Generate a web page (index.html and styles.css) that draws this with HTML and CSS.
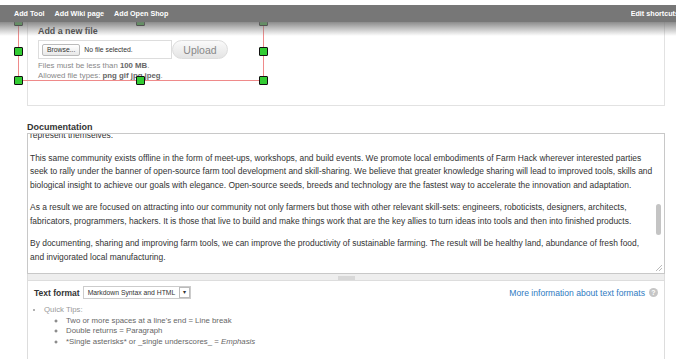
FILE: index.html
```html
<!DOCTYPE html>
<html lang="en">
<head>
  <meta charset="UTF-8">
  <title>Add tool</title>
  <link rel="stylesheet" href="styles.css">
</head>
<body>
  <div class="toolbar">
    <nav class="shortcuts">
      <a href="#">Add Tool</a>
      <a href="#">Add Wiki page</a>
      <a href="#">Add Open Shop</a>
    </nav>
    <a href="#" class="edit">Edit shortcuts</a>
  </div>

  <main class="content">
    <div class="upload">
      <div class="upload-title">Add a new file</div>
      <div class="file-row">
        <div class="file-input">
          <span class="browse">Browse...</span>
          <span class="no-file">No file selected.</span>
        </div>
        <button class="upload-btn">Upload</button>
      </div>
      <div class="desc">Files must be less than <strong>100 MB</strong>.</div>
      <div class="desc">Allowed file types: <strong>png gif jpg jpeg</strong>.</div>

      <div class="selection">
        <span class="handle tl"></span>
        <span class="handle tm"></span>
        <span class="handle tr"></span>
        <span class="handle ml"></span>
        <span class="handle mr"></span>
        <span class="handle bl"></span>
        <span class="handle bm"></span>
        <span class="handle br"></span>
      </div>
    </div>

    <div class="doc">
      <label class="doc-label">Documentation</label>
      <div class="textarea">
        <div class="textarea-view">
          <div class="textarea-text">
            <p>represent themselves.</p>
            <p>This same community exists offline in the form of meet-ups, workshops, and build events. We promote local embodiments of Farm Hack wherever interested parties<br>seek to rally under the banner of open-source farm tool development and skill-sharing. We believe that greater knowledge sharing will lead to improved tools, skills and<br>biological insight to achieve our goals with elegance. Open-source seeds, breeds and technology are the fastest way to accelerate the innovation and adaptation.</p>
            <p>As a result we are focused on attracting into our community not only farmers but those with other relevant skill-sets: engineers, roboticists, designers, architects,<br>fabricators, programmers, hackers. It is those that live to build and make things work that are the key allies to turn ideas into tools and then into finished products.</p>
            <p>By documenting, sharing and improving farm tools, we can improve the productivity of sustainable farming. The result will be healthy land, abundance of fresh food,<br>and invigorated local manufacturing.</p>
          </div>
        </div>
        <div class="scrollbar">
          <div class="thumb"></div>
          <svg class="resize" width="6" height="6" viewBox="0 0 6 6">
            <path d="M6 0 L0 6 M6 3 L3 6" stroke="#aaa" stroke-width="0.8"/>
          </svg>
        </div>
      </div>
      <div class="grippie"><span></span></div>

      <div class="format">
        <div class="format-row">
          <div class="format-select">
            <span class="format-label">Text format</span>
            <span class="select">Markdown Syntax and HTML <span class="arrow">&#9662;</span></span>
          </div>
          <a href="#" class="format-link">More information about text formats <span class="help">?</span></a>
        </div>
        <ul class="tips">
          <li>Quick Tips:
            <ul>
              <li>Two or more spaces at a line's end = Line break</li>
              <li>Double returns = Paragraph</li>
              <li>*Single asterisks* or _single underscores_ = <em>Emphasis</em></li>
            </ul>
          </li>
        </ul>
      </div>
    </div>
  </main>
</body>
</html>
```

FILE: styles.css
```css
body {
  margin: 0;
  background-color: #fff;
  font-family: 'Liberation Sans', Arial, sans-serif;
  color: #333;
  width: 696px;
  height: 359px;
  overflow: hidden;
}

/* shortcut bar */
.toolbar {
  position: relative;
  z-index: 2;
  margin-top: 5px;
  width: 676px;
  height: 17px;
  background-color: #777;
  display: flex;
  align-items: center;
  justify-content: space-between;
  font-size: 7.2px;
  font-weight: bold;
}

.toolbar::after {
  content: '';
  position: absolute;
  left: 0;
  right: 0;
  top: 100%;
  height: 14px;
  background: linear-gradient(rgba(119, 119, 119, 0.85), rgba(255, 255, 255, 0));
}

.toolbar a {
  color: #fff;
  text-decoration: none;
}

.shortcuts {
  display: flex;
  gap: 10px;
  padding-left: 14px;
}

.edit {
  margin-right: -3px;
  white-space: nowrap;
  clip-path: inset(0 3px 0 0);
}

.content {
  padding-left: 27px;
  width: 638px;
}

/* upload field */
.upload {
  position: relative;
  border: 1px solid #e2e2e2;
  border-top: none;
  padding: 3px 10px 24px;
}

.upload-title {
  font-size: 8.9px;
  font-weight: bold;
  line-height: 12px;
  color: #444;
}

.file-row {
  display: flex;
  align-items: center;
  margin-top: 3px;
  margin-bottom: 2px;
}

.file-input {
  width: 129px;
  height: 17px;
  border: 1px solid #ddd;
  display: flex;
  align-items: center;
  gap: 4px;
  padding-left: 3px;
  font-size: 6.8px;
}

.browse {
  border: 1px solid #bbb;
  border-radius: 2px;
  background: linear-gradient(#fff, #e8e8e8);
  padding: 1px 4px;
  line-height: 8px;
}

.upload-btn {
  width: 56px;
  height: 19px;
  border: 1px solid #ddd;
  border-radius: 10px;
  background: linear-gradient(#fafafa, #e4e4e4);
  color: #888;
  font-family: 'Liberation Sans', Arial, sans-serif;
  font-size: 10.5px;
  padding: 0;
}

.desc {
  font-size: 7.8px;
  line-height: 10px;
  color: #888;
}

.desc strong {
  color: #666;
}

/* selection rectangle over the upload field */
.selection {
  position: absolute;
  left: -10px;
  top: -1px;
  width: 244px;
  height: 58px;
  border: 1px solid #ef8a8a;
}

.handle {
  position: absolute;
  width: 7px;
  height: 7px;
  background-color: #33cc33;
  border: 1px solid #111;
  border-radius: 1px;
}

.tl { left: -5px; top: -5px; }
.tm { left: 117px; top: -5px; }
.tr { right: -5px; top: -5px; }
.ml { left: -5px; top: 25px; }
.mr { right: -5px; top: 25px; }
.bl { left: -5px; bottom: -5px; }
.bm { left: 117px; bottom: -5px; }
.br { right: -5px; bottom: -5px; }

/* documentation */
.doc {
  margin-top: 15px;
}

.doc-label {
  display: block;
  font-size: 9px;
  font-weight: bold;
  line-height: 12px;
  color: #333;
}

.textarea {
  display: flex;
  height: 139px;
  border: 1px solid #c8c8c8;
}

.textarea-view {
  flex: 1;
  overflow: hidden;
}

.textarea-text {
  margin-top: -5px;
  padding-left: 2px;
  font-size: 8.45px;
  line-height: 13.5px;
  color: #333;
  white-space: nowrap;
}

.textarea-text p {
  margin: 0 0 9px;
}

.scrollbar {
  width: 11px;
  position: relative;
}

.thumb {
  margin: 70px auto 0;
  width: 5px;
  height: 31px;
  border-radius: 3px;
  background-color: #c4c4c4;
}

.resize {
  position: absolute;
  right: 2px;
  bottom: 2px;
}

.grippie {
  height: 6px;
  background-color: #eee;
  border: 1px solid #ddd;
  border-top: none;
  display: flex;
  justify-content: center;
  align-items: flex-end;
}

.grippie span {
  width: 17px;
  height: 4px;
  background-color: #d8d8d8;
}

/* text format */
.format {
  border: 1px solid #ddd;
  border-top: none;
  height: 75px;
  padding: 5px 6px 0 6px;
}

.format-row {
  display: flex;
  justify-content: space-between;
  align-items: center;
}

.format-select {
  display: flex;
  align-items: center;
  gap: 3px;
}

.format-label {
  font-size: 8.5px;
  font-weight: bold;
  color: #333;
}

.select {
  display: flex;
  align-items: center;
  gap: 4px;
  height: 11px;
  padding-left: 4px;
  border: 1px solid #ccc;
  font-size: 6.8px;
  color: #333;
}

.arrow {
  width: 9px;
  height: 9px;
  border: 1px solid #bbb;
  font-size: 6px;
  line-height: 9px;
  text-align: center;
}

.format-link {
  display: flex;
  align-items: center;
  gap: 4px;
  color: #2f7bc2;
  text-decoration: none;
  font-size: 8.6px;
}

.help {
  width: 9px;
  height: 9px;
  border-radius: 50%;
  background-color: #c6c6c6;
  color: #fff;
  font-size: 7px;
  font-weight: bold;
  line-height: 9px;
  text-align: center;
}

.tips {
  margin: 6px 0 0;
  padding-left: 10px;
  font-size: 7.8px;
  line-height: 10.5px;
  color: #999;
}

.tips ul {
  margin: 0;
  padding-left: 22px;
  color: #666;
}
```
